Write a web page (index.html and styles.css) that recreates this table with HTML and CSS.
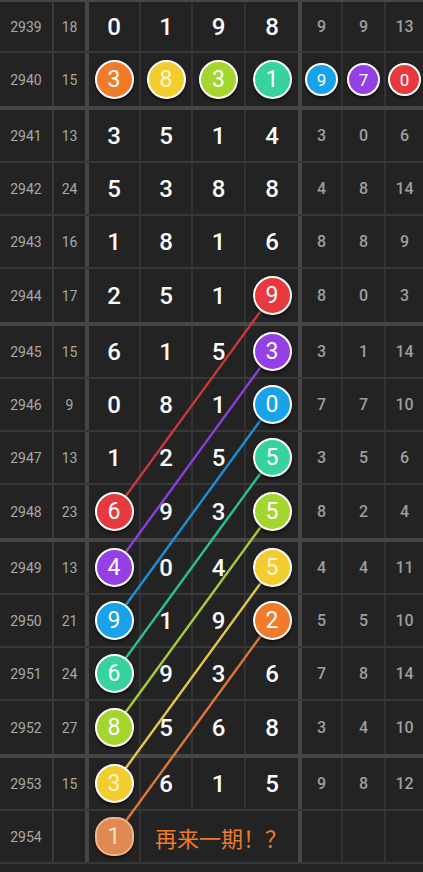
FILE: index.html
```html
<!DOCTYPE html>
<html lang="zh">
<head>
<meta charset="utf-8">
<title>走势图</title>
<link rel="stylesheet" href="styles.css">
</head>
<body>
<div class="board">
  <svg class="lines" width="423" height="872" viewBox="0 0 423 872">
    <line x1="272" y1="295.5" x2="114.5" y2="511.5" stroke="#c8383f"/>
    <line x1="272" y1="351.5" x2="114.5" y2="567.5" stroke="#8a3fd8"/>
    <line x1="272" y1="404.5" x2="114.5" y2="620.5" stroke="#1e8fd6"/>
    <line x1="272" y1="457.5" x2="114.5" y2="673.5" stroke="#2bbf98"/>
    <line x1="272" y1="511.5" x2="114.5" y2="727.5" stroke="#a2cd3c"/>
    <line x1="272" y1="567.5" x2="114.5" y2="783.5" stroke="#e2c94c"/>
    <line x1="272" y1="620.5" x2="114.5" y2="836.5" stroke="#de773a"/>
  </svg>

  <div class="row first">
    <div class="c issue">2939</div><div class="c sum">18</div>
    <div class="c d">0</div><div class="c d">1</div><div class="c d">9</div><div class="c d d4">8</div>
    <div class="c r">9</div><div class="c r">9</div><div class="c r r3">13</div>
  </div>
  <div class="row end">
    <div class="c issue">2940</div><div class="c sum">15</div>
    <div class="c d"><span class="ball orange">3</span></div>
    <div class="c d"><span class="ball yellow">8</span></div>
    <div class="c d"><span class="ball lime">3</span></div>
    <div class="c d d4"><span class="ball teal">1</span></div>
    <div class="c r"><span class="ball sm blue">9</span></div>
    <div class="c r"><span class="ball sm purple">7</span></div>
    <div class="c r r3"><span class="ball sm red">0</span></div>
  </div>

  <div class="row">
    <div class="c issue">2941</div><div class="c sum">13</div>
    <div class="c d">3</div><div class="c d">5</div><div class="c d">1</div><div class="c d d4">4</div>
    <div class="c r">3</div><div class="c r">0</div><div class="c r r3">6</div>
  </div>
  <div class="row">
    <div class="c issue">2942</div><div class="c sum">24</div>
    <div class="c d">5</div><div class="c d">3</div><div class="c d">8</div><div class="c d d4">8</div>
    <div class="c r">4</div><div class="c r">8</div><div class="c r r3">14</div>
  </div>
  <div class="row">
    <div class="c issue">2943</div><div class="c sum">16</div>
    <div class="c d">1</div><div class="c d">8</div><div class="c d">1</div><div class="c d d4">6</div>
    <div class="c r">8</div><div class="c r">8</div><div class="c r r3">9</div>
  </div>
  <div class="row end">
    <div class="c issue">2944</div><div class="c sum">17</div>
    <div class="c d">2</div><div class="c d">5</div><div class="c d">1</div>
    <div class="c d d4"><span class="ball red">9</span></div>
    <div class="c r">8</div><div class="c r">0</div><div class="c r r3">3</div>
  </div>

  <div class="row">
    <div class="c issue">2945</div><div class="c sum">15</div>
    <div class="c d">6</div><div class="c d">1</div><div class="c d">5</div>
    <div class="c d d4"><span class="ball purple">3</span></div>
    <div class="c r">3</div><div class="c r">1</div><div class="c r r3">14</div>
  </div>
  <div class="row">
    <div class="c issue">2946</div><div class="c sum">9</div>
    <div class="c d">0</div><div class="c d">8</div><div class="c d">1</div>
    <div class="c d d4"><span class="ball blue">0</span></div>
    <div class="c r">7</div><div class="c r">7</div><div class="c r r3">10</div>
  </div>
  <div class="row">
    <div class="c issue">2947</div><div class="c sum">13</div>
    <div class="c d">1</div><div class="c d">2</div><div class="c d">5</div>
    <div class="c d d4"><span class="ball teal">5</span></div>
    <div class="c r">3</div><div class="c r">5</div><div class="c r r3">6</div>
  </div>
  <div class="row end">
    <div class="c issue">2948</div><div class="c sum">23</div>
    <div class="c d"><span class="ball red">6</span></div>
    <div class="c d">9</div><div class="c d">3</div>
    <div class="c d d4"><span class="ball lime">5</span></div>
    <div class="c r">8</div><div class="c r">2</div><div class="c r r3">4</div>
  </div>

  <div class="row">
    <div class="c issue">2949</div><div class="c sum">13</div>
    <div class="c d"><span class="ball purple">4</span></div>
    <div class="c d">0</div><div class="c d">4</div>
    <div class="c d d4"><span class="ball yellow">5</span></div>
    <div class="c r">4</div><div class="c r">4</div><div class="c r r3">11</div>
  </div>
  <div class="row">
    <div class="c issue">2950</div><div class="c sum">21</div>
    <div class="c d"><span class="ball blue">9</span></div>
    <div class="c d">1</div><div class="c d">9</div>
    <div class="c d d4"><span class="ball orange">2</span></div>
    <div class="c r">5</div><div class="c r">5</div><div class="c r r3">10</div>
  </div>
  <div class="row">
    <div class="c issue">2951</div><div class="c sum">24</div>
    <div class="c d"><span class="ball teal">6</span></div>
    <div class="c d">9</div><div class="c d">3</div><div class="c d d4">6</div>
    <div class="c r">7</div><div class="c r">8</div><div class="c r r3">14</div>
  </div>
  <div class="row end">
    <div class="c issue">2952</div><div class="c sum">27</div>
    <div class="c d"><span class="ball lime">8</span></div>
    <div class="c d">5</div><div class="c d">6</div><div class="c d d4">8</div>
    <div class="c r">3</div><div class="c r">4</div><div class="c r r3">10</div>
  </div>

  <div class="row">
    <div class="c issue">2953</div><div class="c sum">15</div>
    <div class="c d"><span class="ball yellow">3</span></div>
    <div class="c d">6</div><div class="c d">1</div><div class="c d d4">5</div>
    <div class="c r">9</div><div class="c r">8</div><div class="c r r3">12</div>
  </div>
  <div class="row">
    <div class="c issue">2954</div><div class="c sum"></div>
    <div class="c d"><span class="ball next">1</span></div>
    <div class="c span">再来一期！？</div>
    <div class="c r"></div><div class="c r"></div><div class="c r r3"></div>
  </div>
</div>
</body>
</html>
```

FILE: styles.css
```css
html, body {
  margin: 0;
  padding: 0;
  background: #252525;
}
body {
  width: 423px;
  height: 872px;
  overflow: hidden;
  font-family: Roboto, "Noto Sans CJK SC", sans-serif;
}
.board {
  position: relative;
  width: 423px;
  border-top: 2px solid #464646;
}
.lines {
  position: absolute;
  left: 0;
  top: -2px;
  z-index: 1;
  stroke-width: 2.4;
  pointer-events: none;
}
.row {
  display: grid;
  grid-template-columns: 54px 35px 52px 52px 53px 56px 41px 43px 37px;
  height: 53px;
  box-sizing: border-box;
  border-bottom: 2px solid #383838;
}
.row.first {
  height: 51px;
}
.row.end {
  height: 57px;
  border-bottom: 4px solid #464646;
}
.c {
  display: flex;
  align-items: center;
  justify-content: center;
  box-sizing: border-box;
  border-right: 2px solid #333;
  background: #232323;
}
.issue {
  font-size: 14px;
  color: #a8a8a8;
  border-right-color: #383838;
}
.sum {
  font-size: 14px;
  color: #a8a8a8;
  border-right: 4px solid #464646;
}
.d {
  font-size: 24px;
  font-weight: 500;
  color: #fbfbfb;
}
.d4 {
  border-right: 4px solid #464646;
}
.r {
  font-size: 16px;
  font-weight: 500;
  color: #9e9e9e;
}
.r3 {
  border-right: none;
}
.span {
  grid-column: 4 / 7;
  justify-content: flex-start;
  padding-left: 14px;
  font-family: "Noto Sans CJK SC", sans-serif;
  font-size: 22px;
  color: #ef7a2c;
  border-right: 4px solid #464646;
}
.ball {
  position: relative;
  z-index: 2;
  width: 39px;
  height: 39px;
  box-sizing: border-box;
  border: 2px solid #fff;
  border-radius: 50%;
  display: flex;
  align-items: center;
  justify-content: center;
  font-size: 23px;
  font-weight: 400;
  color: #fff;
  box-shadow: 0 2px 3px rgba(0, 0, 0, 0.55);
}
.ball.sm {
  width: 33px;
  height: 33px;
  font-size: 17px;
}
.orange { background: #f07b2a; }
.yellow { background: #f3cc2f; color: #fff6cf; }
.lime { background: #a5d62d; }
.teal { background: #36d39f; }
.blue { background: #17a2ea; }
.purple { background: #9440e4; }
.red { background: #e63a3f; }
.next {
  background: #df8a52;
  border-color: #f3b58e;
  border-radius: 45%;
  color: #fde3d2;
}
```
